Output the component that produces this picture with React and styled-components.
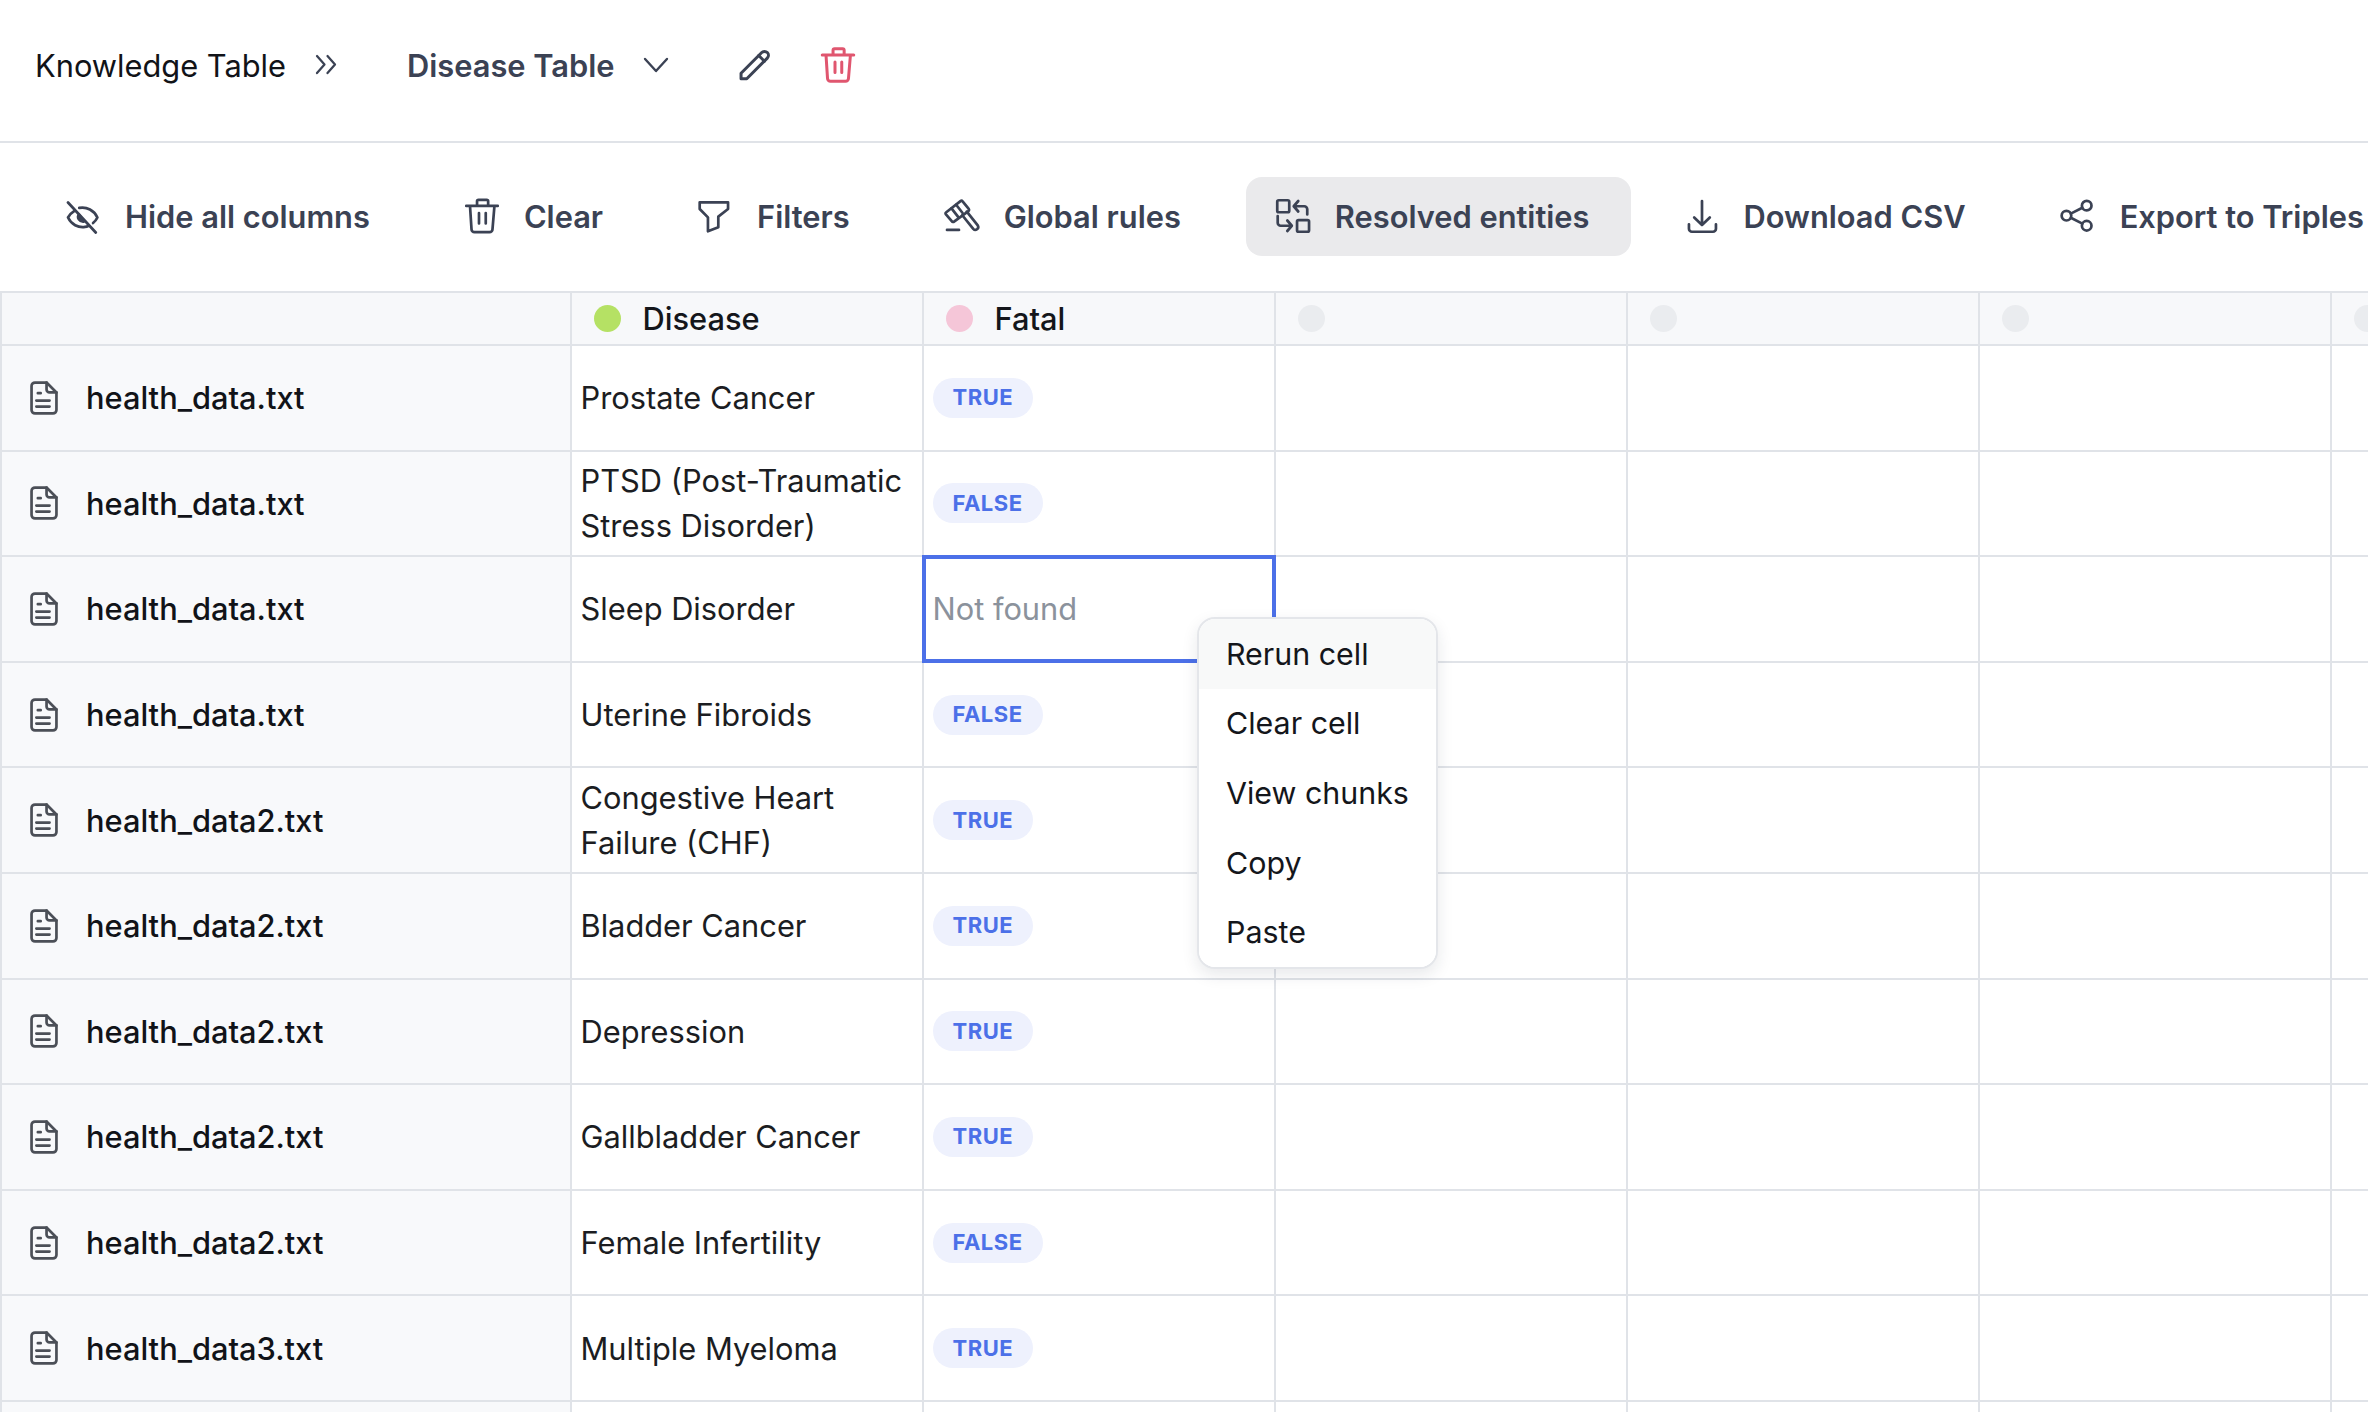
import React from "react";
import styled, { createGlobalStyle } from "styled-components";

const GlobalStyle = createGlobalStyle`
  html, body {
    margin: 0;
    padding: 0;
    background: #fff;
    font-family: Inter, "Liberation Sans", sans-serif;
  }
`;

const Page = styled.div`
  width: 2368px;
  height: 1412px;
  overflow: hidden;
  background: #fff;
`;

const TopBar = styled.header`
  box-sizing: border-box;
  height: 143px;
  border-bottom: 2px solid #e0e3e8;
  padding: 0 0 11px 35px;
  display: flex;
  align-items: center;
  gap: 63px;
`;

const BarGroup = styled.div`
  display: flex;
  align-items: center;
  gap: ${props => props.$gap}px;
`;

const Crumb = styled.span`
  font-size: 30.8px;
  color: #111318;
`;

const TableName = styled.span`
  font-size: 30.8px;
  font-weight: 600;
  color: #3b4254;
`;

const Svg = styled.svg`
  width: 36px;
  height: 36px;
  flex-shrink: 0;
  fill: none;
  stroke: ${props => props.$color || "#3b4254"};
  stroke-width: ${props => props.$weight || 1.8};
  stroke-linecap: round;
  stroke-linejoin: round;
`;

const Icon = ({ children, ...rest }) => (
  <Svg viewBox="0 0 24 24" {...rest}>{children}</Svg>
);

const TrashIcon = props => (
  <Icon {...props}>
    <path d="M1.500 5.300h21M4 5.300l1 15.500a2 2 0 0 0 2 2h10a2 2 0 0 0 2-2l1.300-15.500M8.700 5.300V2.200a1 1 0 0 1 1-1h5.400a1 1 0 0 1 1 1v3.100M10 10v7M14.500 10v7" />
  </Icon>
);

const EyeOffIcon = () => (
  <Icon>
    <path d="M2 3l18.500 20" />
    <path d="M9.500 6.600C14.500 5.600 19.500 8.300 21.600 13c-.7 1.500-1.700 2.700-2.900 3.700" />
    <path d="M6.300 8.600C4.500 9.700 3 11.200 2 13c2.200 4.600 6.800 7 11.300 6.300.9-.1 1.700-.4 2.500-.8" />
    <path d="M9.300 11c-1.500 2 .2 5 3.200 4.700z" fill="#3b4254" />
  </Icon>
);

const FilterIcon = () => (
  <Icon>
    <path d="M1.800 2.900H20.700V7.300L14.200 12.400V19.500L7.300 22.200V12.900L1.800 7.300Z" />
  </Icon>
);

const GavelIcon = () => (
  <Icon>
    <path d="M1.500 9.500L11 2.100a1 1 0 0 1 1.400.2L16.500 7.300a1 1 0 0 1-.2 1.400L6.700 15.800a1 1 0 0 1-1.400-.2L1.300 10.900a1 1 0 0 1 .2-1.400z" />
    <path d="M5 6.900l4.300 5.500M8.100 4.500l4.300 5.500" />
    <path d="M12.200 11.500l7.300 9.100a1.900 1.900 0 0 0 3-2.300L15.200 9.100" />
    <path d="M2 21.300h8" />
  </Icon>
);

const ResolveIcon = () => (
  <Icon>
    <rect x="1.500" y="1.500" width="8" height="8" rx="1" />
    <rect x="14.700" y="14.700" width="8" height="7.800" rx="1" />
    <path d="M15.500 2l-3 3.500 3 3.500M12.500 5.500h7a2 2 0 0 1 2 2V11" />
    <path d="M1.800 12v4.500a2 2 0 0 0 2 2H11.200M8.200 15l3 3.500-3 3.500" />
  </Icon>
);

const DownloadIcon = () => (
  <Icon>
    <path d="M12 2v16M6.800 13l5.200 5 5.200-5" />
    <path d="M3.300 17.500v3a2 2 0 0 0 2 2h14a2 2 0 0 0 2-2v-3" />
  </Icon>
);

const ShareIcon = () => (
  <Icon>
    <circle cx="4.300" cy="11.800" r="3.200" />
    <circle cx="17.800" cy="5.100" r="3.200" />
    <circle cx="17.800" cy="18.500" r="3.200" />
    <path d="M7.200 10.400l7.700-3.900M7.200 13.200l7.700 3.900" />
  </Icon>
);

const DocIcon = () => (
  <Icon $color="#4b4f57">
    <path d="M13.700 1.700H6a2.300 2.300 0 0 0-2.300 2.300v16a2.300 2.300 0 0 0 2.300 2.300h12a2.300 2.300 0 0 0 2.300-2.300V8.300z" />
    <path d="M13.700 1.700v4.600a2 2 0 0 0 2 2h4.600" />
    <path d="M7.900 8.800H9.800M6.900 13.700h8.800M6.900 17.700h8.800" />
  </Icon>
);

const Toolbar = styled.nav`
  box-sizing: border-box;
  height: 148px;
  padding: 0 0 2px 36px;
  display: flex;
  align-items: center;
  gap: 24px;
`;

const ToolButton = styled.div`
  height: 79px;
  padding: 0 41px 0 29px;
  display: flex;
  align-items: center;
  gap: 24px;
  flex-shrink: 0;
  border-radius: 16px;
  background: ${props => props.$active ? "#eaeaec" : "transparent"};
  font-size: 30.8px;
  font-weight: 600;
  color: #3b4254;
  white-space: nowrap;
`;

const TableWrap = styled.div`
  position: relative;
`;

const Table = styled.div`
  display: grid;
  grid-template-columns: 571.5px repeat(6, 352px);
  grid-template-rows: 53px;
  grid-auto-rows: 105.6px;
  border-top: 2px solid #e0e3e8;
`;

const Cell = styled.div`
  box-sizing: border-box;
  position: relative;
  display: flex;
  align-items: center;
  padding: 0 9px;
  border-right: 2px solid #e0e3e8;
  border-bottom: 2px solid #e0e3e8;
  font-size: 30.8px;
  line-height: 45px;
  color: #1b1d22;
`;

const HeadCell = styled(Cell)`
  background: #f7f8fa;
  font-weight: 500;
  gap: 22px;
  padding-left: 22px;
  color: #14161b;
`;

const CornerCell = styled(HeadCell)`
  border-left: 2px solid #e0e3e8;
`;

const Dot = styled.span`
  width: 27px;
  height: 27px;
  border-radius: 50%;
  background: ${props => props.$color};
`;

const FileCell = styled(Cell)`
  background: #f8f9fb;
  border-left: 2px solid #e0e3e8;
  padding-left: 24px;
  gap: 24px;
  font-weight: 500;
  color: #111318;
`;

const SelectedCell = styled(Cell)`
  color: #8b929c;

  &::after {
    content: "";
    position: absolute;
    top: -2px;
    left: -2px;
    right: -2px;
    bottom: -2px;
    border: 4px solid #4c70e8;
    pointer-events: none;
  }
`;

const Pill = styled.span`
  height: 40px;
  padding: 0 20px;
  display: inline-flex;
  align-items: center;
  border-radius: 20px;
  background: #eef1fd;
  color: #4c70e8;
  font-size: 22px;
  font-weight: 700;
  letter-spacing: 0.5px;
`;

const Menu = styled.div`
  position: absolute;
  left: 1197px;
  top: 326px;
  z-index: 5;
  width: 241px;
  box-sizing: border-box;
  overflow: hidden;
  background: #fff;
  border: 2px solid #e4e6ea;
  border-radius: 18px;
  box-shadow: 0 6px 16px rgba(30, 40, 60, 0.1);
`;

const MenuItem = styled.div`
  height: 69.6px;
  padding-left: 27px;
  display: flex;
  align-items: center;
  font-size: 30.4px;
  color: #14161b;
  background: ${props => props.$hover ? "#f8f9f9" : "#fff"};
`;

const tools = [
  { label: "Hide all columns", icon: <EyeOffIcon /> },
  { label: "Clear", icon: <TrashIcon /> },
  { label: "Filters", icon: <FilterIcon /> },
  { label: "Global rules", icon: <GavelIcon /> },
  { label: "Resolved entities", icon: <ResolveIcon />, active: true },
  { label: "Download CSV", icon: <DownloadIcon /> },
  { label: "Export to Triples", icon: <ShareIcon /> },
];

const rows = [
  ["health_data.txt", "Prostate Cancer", "TRUE"],
  ["health_data.txt", "PTSD (Post-Traumatic Stress Disorder)", "FALSE"],
  ["health_data.txt", "Sleep Disorder", null],
  ["health_data.txt", "Uterine Fibroids", "FALSE"],
  ["health_data2.txt", "Congestive Heart Failure (CHF)", "TRUE"],
  ["health_data2.txt", "Bladder Cancer", "TRUE"],
  ["health_data2.txt", "Depression", "TRUE"],
  ["health_data2.txt", "Gallbladder Cancer", "TRUE"],
  ["health_data2.txt", "Female Infertility", "FALSE"],
  ["health_data3.txt", "Multiple Myeloma", "TRUE"],
];

const blanks = [0, 1, 2, 3];

export default function App() {
  return (
    <Page>
      <GlobalStyle />
      <TopBar>
        <BarGroup $gap={22}>
          <Crumb>Knowledge Table</Crumb>
          <Icon $weight={1.5}>
            <path d="M6 6l5 5.700-5 5.700M13 6l5 5.700-5 5.700" />
          </Icon>
        </BarGroup>
        <BarGroup $gap={23}>
          <TableName>Disease Table</TableName>
          <Icon $weight={1.6}>
            <path d="M4.700 8l7.300 8 7.300-8" />
          </Icon>
        </BarGroup>
        <BarGroup $gap={47}>
          <Icon $weight={2}>
            <path d="M2.700 17.500L16.500 3.700a2.600 2.600 0 0 1 3.700 3.700L6.500 21.200H2.700z" />
            <path d="M14.500 5.700l3.800 3.800" />
          </Icon>
          <TrashIcon $color="#e0566f" $weight={2} />
        </BarGroup>
      </TopBar>

      <Toolbar>
        {tools.map(tool => (
          <ToolButton key={tool.label} $active={tool.active}>
            {tool.icon}
            {tool.label}
          </ToolButton>
        ))}
      </Toolbar>

      <TableWrap>
        <Table>
          <CornerCell />
          <HeadCell><Dot $color="#b5e164" />Disease</HeadCell>
          <HeadCell><Dot $color="#f5c6d8" />Fatal</HeadCell>
          {blanks.map(i => (
            <HeadCell key={i}><Dot $color="#eaecef" /></HeadCell>
          ))}

          {rows.map(([file, disease, fatal], r) => (
            <React.Fragment key={r}>
              <FileCell><DocIcon />{file}</FileCell>
              <Cell>{disease}</Cell>
              {fatal ? <Cell><Pill>{fatal}</Pill></Cell> : <SelectedCell>Not found</SelectedCell>}
              {blanks.map(i => <Cell key={i} />)}
            </React.Fragment>
          ))}
          <FileCell />
          <Cell />
          <Cell />
          {blanks.map(i => <Cell key={i} />)}
        </Table>

        <Menu>
          <MenuItem $hover>Rerun cell</MenuItem>
          <MenuItem>Clear cell</MenuItem>
          <MenuItem>View chunks</MenuItem>
          <MenuItem>Copy</MenuItem>
          <MenuItem>Paste</MenuItem>
        </Menu>
      </TableWrap>
    </Page>
  );
}
